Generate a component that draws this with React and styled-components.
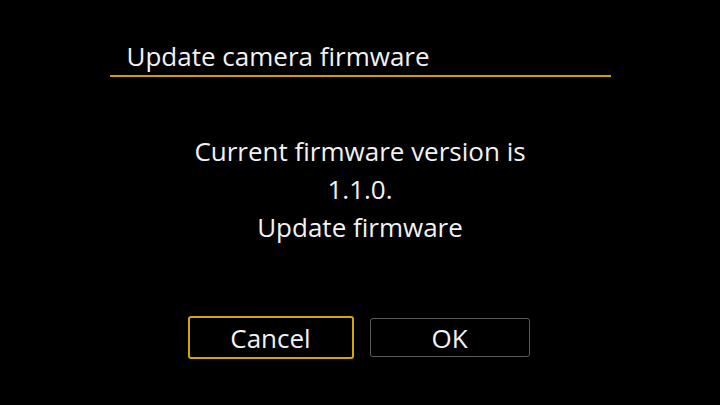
import React from "react";
import styled, { createGlobalStyle } from "styled-components";

const Global = createGlobalStyle`
  html, body { margin: 0; padding: 0; background: #000; }
  body { width: 720px; height: 405px; overflow: hidden; }
`;

const Screen = styled.div`
  width: 720px;
  height: 405px;
  background: #000;
  color: #f2f2f2;
  font-family: "Open Sans", "Noto Sans", sans-serif;
  display: flex;
  flex-direction: column;
  align-items: center;
  box-sizing: border-box;
  padding-top: 41px;
`;

const Header = styled.div`
  width: 501px;
  box-sizing: border-box;
  border-bottom: 2px solid #c9a100;
  padding: 0 0 4px 17px;
  font-size: 26px;
  line-height: 30px;
`;

const Message = styled.div`
  margin-top: 55px;
  text-align: center;
  font-size: 26px;
  line-height: 38px;
`;

const Buttons = styled.div`
  margin-top: 70px;
  margin-right: 3px;
  display: flex;
  gap: 16px;
  align-items: center;
`;

const Button = styled.div`
  box-sizing: border-box;
  width: ${p => (p.$selected ? 166 : 160)}px;
  height: ${p => (p.$selected ? 43 : 39)}px;
  border: ${p => (p.$selected ? "2px solid #d1a900" : "1.5px solid #5a5a5a")};
  border-radius: 3px;
  display: flex;
  align-items: center;
  justify-content: center;
  font-size: 26px;
`;

export default function App() {
  return (
    <>
      <Global />
      <Screen>
        <Header>Update camera firmware</Header>
        <Message>
          Current firmware version is
          <br />
          1.1.0.
          <br />
          Update firmware
        </Message>
        <Buttons>
          <Button $selected>Cancel</Button>
          <Button>OK</Button>
        </Buttons>
      </Screen>
    </>
  );
}
